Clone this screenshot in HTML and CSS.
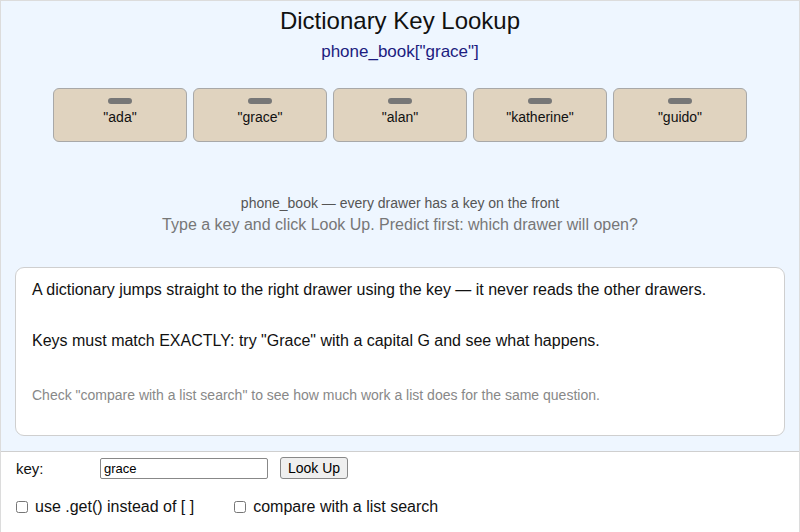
FILE: index.html
```html
<!DOCTYPE html>
<html lang="en">
<head>
    <meta charset="UTF-8">
    <meta name="viewport" content="width=device-width, initial-scale=1.0">
    <title>Dictionary Key Lookup</title>
    <link rel="stylesheet" href="styles.css">
</head>
    <body>
        <div class="app">
            <div class="stage">
                <h1>Dictionary Key Lookup</h1>
                <div class="expr">phone_book["grace"]</div>

                <div class="drawers">
                    <div class="drawer"><span class="handle"></span><span class="key">"ada"</span></div>
                    <div class="drawer"><span class="handle"></span><span class="key">"grace"</span></div>
                    <div class="drawer"><span class="handle"></span><span class="key">"alan"</span></div>
                    <div class="drawer"><span class="handle"></span><span class="key">"katherine"</span></div>
                    <div class="drawer"><span class="handle"></span><span class="key">"guido"</span></div>
                </div>

                <div class="caption">phone_book — every drawer has a key on the front</div>
                <div class="prompt">Type a key and click Look Up. Predict first: which drawer will open?</div>

                <div class="notes">
                    <p>A dictionary jumps straight to the right drawer using the key — it never reads the other drawers.</p>
                    <p>Keys must match EXACTLY: try "Grace" with a capital G and see what happens.</p>
                    <p class="hint">Check "compare with a list search" to see how much work a list does for the same question.</p>
                </div>
            </div>

            <div class="controls">
                <div class="row">
                    <label for="key" class="key-label">key:</label>
                    <input type="text" id="key" value="grace">
                    <button type="button">Look Up</button>
                </div>
                <div class="row">
                    <label class="check"><input type="checkbox"> use .get() instead of [ ]</label>
                    <label class="check"><input type="checkbox"> compare with a list search</label>
                </div>
            </div>
        </div>
    </body>
</html>
```

FILE: styles.css
```css
* {
    box-sizing: border-box;
}

body {
    margin: 0;
    font-family: "Liberation Sans", Arial, sans-serif;
}

.app {
    width: 800px;
    height: 532px;
    border: 1px solid #dcdcdc;
    display: flex;
    flex-direction: column;
}

.stage {
    height: 451px;
    flex-shrink: 0;
    background-color: #eef6ff;
    border-bottom: 1px solid #cfcfcf;
    padding: 6px 14px 0;
    text-align: center;
}

h1 {
    margin: 0;
    font-size: 24px;
    font-weight: normal;
    color: #111;
}

.expr {
    margin-top: 7px;
    font-size: 17px;
    color: #1c1c80;
}

.drawers {
    display: flex;
    justify-content: center;
    gap: 6px;
    margin-top: 26px;
}

.drawer {
    width: 134px;
    height: 54px;
    background-color: #e0d3bf;
    border: 1px solid #a8a8a8;
    border-radius: 6px;
    display: flex;
    flex-direction: column;
    align-items: center;
    padding-top: 9px;
}

.handle {
    width: 24px;
    height: 6px;
    border-radius: 3px;
    background-color: #777;
}

.key {
    margin-top: 5px;
    font-size: 14px;
    color: #111;
}

.caption {
    margin-top: 53px;
    font-size: 14px;
    color: #555;
}

.prompt {
    margin-top: 5px;
    font-size: 16px;
    color: #777;
}

.notes {
    margin-top: 33px;
    background: #fff;
    border: 1px solid #cfcfcf;
    border-radius: 9px;
    height: 169px;
    padding: 13px 16px 0;
    text-align: left;
}

.notes p {
    margin: 0 0 33px;
    font-size: 16px;
    color: #111;
}

.notes p + p {
    margin-top: 1px;
    margin-bottom: 37px;
}

.notes p.hint {
    margin-top: 0;
    font-size: 14px;
    color: #888;
}

.controls {
    flex: 1;
    background: #fff;
    padding: 5px 15px 0;
}

.row {
    display: flex;
    align-items: center;
    margin-bottom: 19px;
}

.key-label {
    width: 84px;
    font-size: 15px;
    color: #111;
}

input[type="text"] {
    width: 168px;
    height: 21px;
    padding: 1px 3px;
    border: 1px solid #888;
    border-radius: 2px;
    font-family: "Liberation Sans", Arial, sans-serif;
    font-size: 13px;
}

button {
    margin-left: 12px;
    height: 22px;
    padding: 0 7px;
    font-family: "Liberation Sans", Arial, sans-serif;
    font-size: 14px;
    background: #efefef;
    border: 1px solid #888;
    border-radius: 3px;
}

.check {
    display: flex;
    align-items: center;
    font-size: 16px;
    color: #111;
    margin-right: 40px;
}

.check input {
    margin: 0 7px 0 0;
    width: 12px;
    height: 12px;
}
```
